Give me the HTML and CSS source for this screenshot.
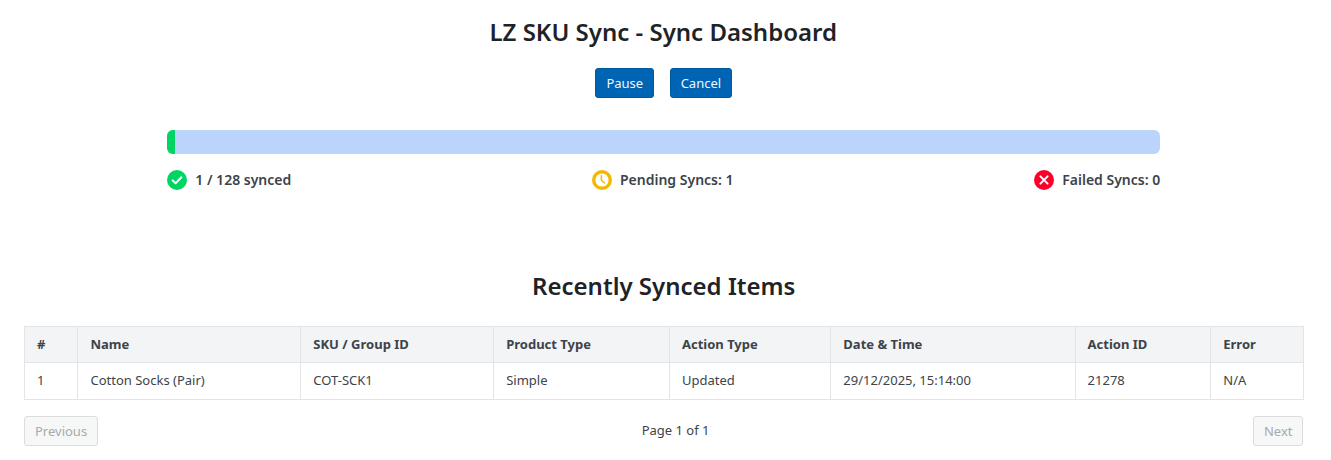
FILE: index.html
```html
<!DOCTYPE html>
<html lang="en">
<head>
<meta charset="utf-8">
<title>LZ SKU Sync - Sync Dashboard</title>
<link rel="stylesheet" href="styles.css">
</head>
<body>
<main class="page">
  <h1 class="title">LZ SKU Sync - Sync Dashboard</h1>
  <div class="actions">
    <button class="btn" type="button">Pause</button>
    <button class="btn" type="button">Cancel</button>
  </div>
  <section class="progress-wrap">
    <div class="progress"><div class="progress-fill" style="width:0.78%"></div></div>
    <div class="stats">
      <div class="stat">
        <svg class="icon" viewBox="0 0 20 20"><circle cx="10" cy="10" r="10" fill="#00d563"/><path d="M5.6 10.4l3 2.9 5.8-6" fill="none" stroke="#fff" stroke-width="2" stroke-linecap="round" stroke-linejoin="round"/></svg>
        <span>1 / 128 synced</span>
      </div>
      <div class="stat">
        <svg class="icon" viewBox="0 0 20 20"><circle cx="10" cy="10" r="8.3" fill="#fff" stroke="#f5b800" stroke-width="3.4"/><path d="M9.4 5.6v4.6l3 2.8" fill="none" stroke="#f5b800" stroke-width="1.5" stroke-linecap="round" stroke-linejoin="round"/></svg>
        <span>Pending Syncs: 1</span>
      </div>
      <div class="stat">
        <svg class="icon" viewBox="0 0 20 20"><circle cx="10" cy="10" r="10" fill="#fb0028"/><path d="M6.4 6.4l7.2 7.2M13.6 6.4l-7.2 7.2" fill="none" stroke="#fff" stroke-width="2" stroke-linecap="round"/></svg>
        <span>Failed Syncs: 0</span>
      </div>
    </div>
  </section>
  <h2 class="subtitle">Recently Synced Items</h2>
  <table class="table">
    <thead>
      <tr><th>#</th><th>Name</th><th>SKU / Group ID</th><th>Product Type</th><th>Action Type</th><th>Date &amp; Time</th><th>Action ID</th><th>Error</th></tr>
    </thead>
    <tbody>
      <tr><td>1</td><td>Cotton Socks (Pair)</td><td>COT-SCK1</td><td>Simple</td><td>Updated</td><td>29/12/2025, 15:14:00</td><td>21278</td><td>N/A</td></tr>
    </tbody>
  </table>
  <div class="pager">
    <button class="pager-btn" type="button" disabled>Previous</button>
    <span class="pager-label">Page 1 of 1</span>
    <button class="pager-btn" type="button" disabled>Next</button>
  </div>
</main>
</body>
</html>
```
FILE: styles.css
```css
* { box-sizing: border-box; }
html, body { margin: 0; background: #fff; }
body { font-family: "Noto Sans", sans-serif; color: #1d2327; }
.page { padding: 16px 27.5px 14px 24px; }
.title { margin: 0; padding-right: 1px; font-size: 24px; line-height: 32px; font-weight: 600; text-align: center; }
.actions { display: flex; justify-content: center; gap: 15.5px; margin-top: 20px; }
.btn {
  height: 30px; padding: 0 10px; font: 400 13px/28px "Noto Sans", sans-serif;
  color: #f0f6fc; background: #0064b4; border: 1px solid #005a9e; border-radius: 3px;
}
.progress-wrap { width: 993px; margin: 32px auto 0; }
.progress { height: 24px; background: #bbd4fb; border-radius: 6px; overflow: hidden; }
.progress-fill { height: 100%; background: #00d563; }
.stats { display: flex; justify-content: space-between; margin-top: 16px; }
.stat { display: flex; align-items: center; gap: 8px; font-size: 14px; line-height: 20px; font-weight: 600; color: #3c434a; }
.icon { width: 20px; height: 20px; flex: none; }
.subtitle { margin: 80px 0 0; font-size: 24px; line-height: 32px; font-weight: 600; text-align: center; }
.table { width: 100%; margin-top: 24px; border-collapse: collapse; font-size: 13px; color: #3c434a; border: 1px solid #e2e4e7; }
.table th { padding: 7px 12px 8px; line-height: 20px; text-align: left; border: 1px solid #e2e4e7; font-weight: 700; background: #f3f4f6; }
.table td { padding: 7px 12px 9px; line-height: 20px; text-align: left; border: 1px solid #e2e4e7; font-weight: 400; }
.pager { display: flex; align-items: center; justify-content: space-between; margin-top: 16px; }
.pager-btn {
  height: 30px; padding: 0 10px; font: 400 13px/28px "Noto Sans", sans-serif;
  color: #a7aaad; background: #f6f7f7; border: 1px solid #dcdcde; border-radius: 3px;
}
.pager-label { font-size: 13px; line-height: 20px; color: #3c434a; margin-top: -2px; }
```
